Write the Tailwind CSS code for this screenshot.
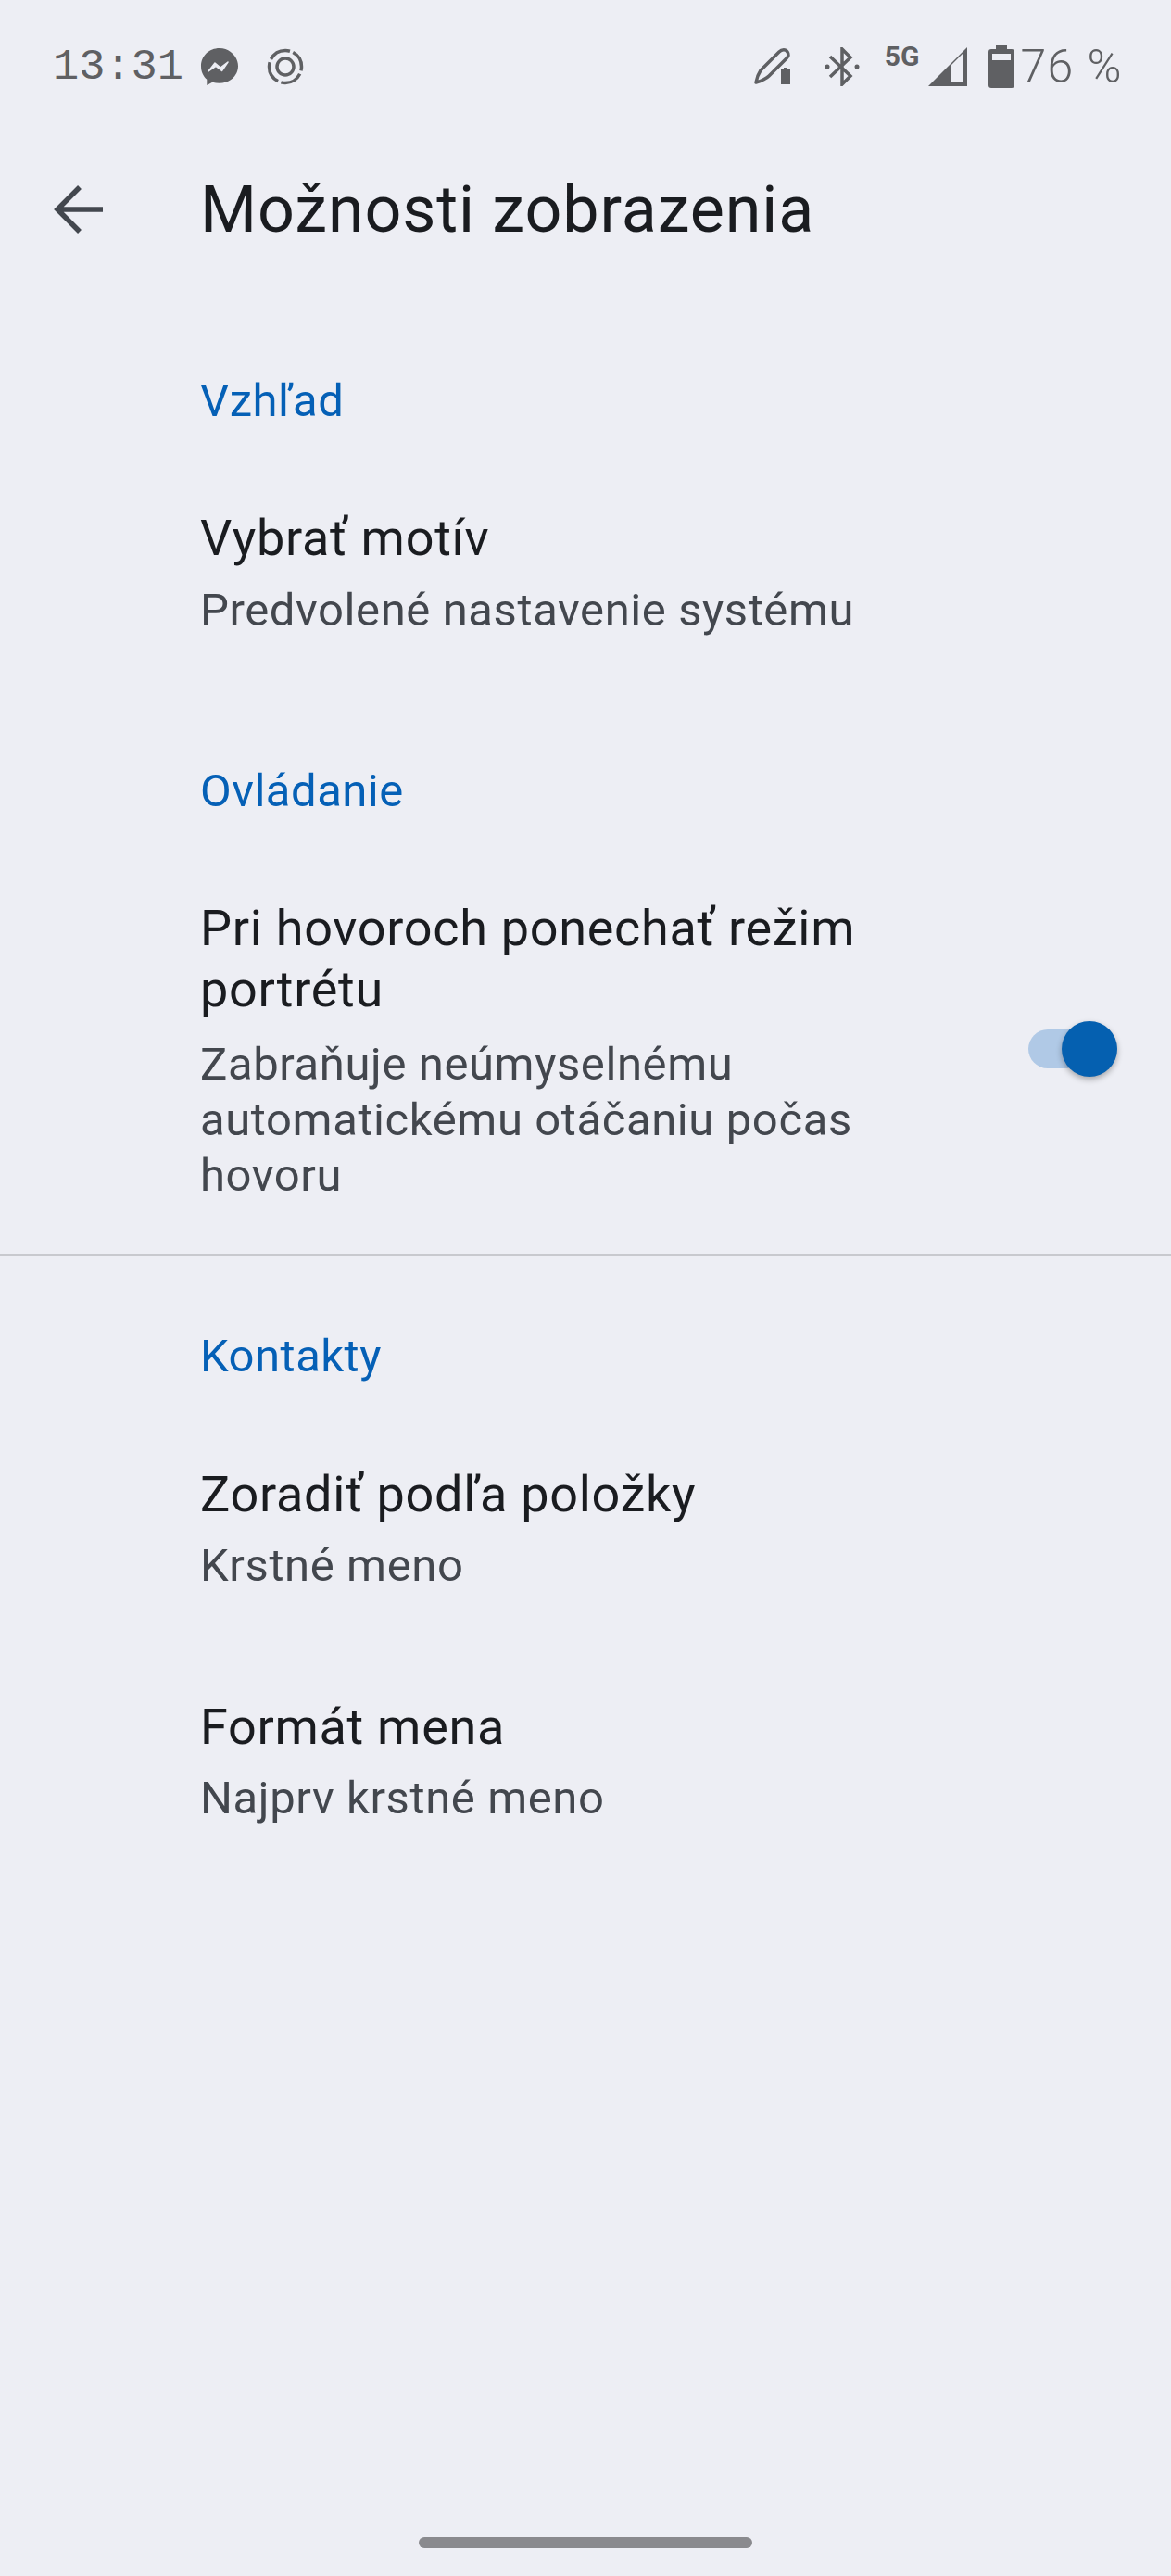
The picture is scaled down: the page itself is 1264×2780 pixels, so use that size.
<!DOCTYPE html>
<html lang="sk">
<head>
    <meta charset="UTF-8">
    <meta name="viewport" content="width=device-width, initial-scale=1.0">
    <title>Možnosti zobrazenia</title>
    <script src="https://cdn.jsdelivr.net/npm/@tailwindcss/browser@4"></script>
</head>
<body class="bg-[#edeef4] font-['Roboto',sans-serif] text-[#1a1c20]">
    <div class="relative w-[1264px] h-[2780px] overflow-hidden flex flex-col">
        <!-- Status bar -->
        <div class="h-[144px] flex items-center justify-between pl-[57px] pr-[52px] text-[#5f6063]">
            <div class="flex items-center">
                <span class="font-['Liberation_Mono',monospace] text-[47px] leading-none mt-[1px]">13:31</span>
                <svg class="ml-[18px] w-[42px] h-[42px]" viewBox="0 0 42 42">
                    <path d="M21 1C9.700 1 1 9.300 1 20.400c0 5.800 2.400 10.800 6.300 14.300v6.300l6-3.300c2.400.7 5 1 7.700 1 11.300 0 20-8.300 20-18.300S32.300 1 21 1z" fill="#5f6063"/>
                    <path d="M9 26l7-9 6 5 8-6-6.500 9.500-6.500-5z" fill="#edeef4" stroke="#edeef4" stroke-width="1.500" stroke-linejoin="round"/>
                </svg>
                <svg class="ml-[30px] w-[40px] h-[40px]" viewBox="0 0 40 40" fill="none" stroke="#5f6063">
                    <circle cx="20" cy="20" r="17.500" stroke-width="3.500" stroke-dasharray="24 3.500" stroke-dashoffset="-8"/>
                    <circle cx="20" cy="20" r="9" stroke-width="3.500"/>
                </svg>
            </div>
            <div class="flex items-center">
                <svg class="w-[42px] h-[42px]" viewBox="0 0 42 42" fill="none">
                    <path d="M2 38c1-6 3-10 5-13L27 5c3-3 7-3 9 0s1 5-1 7L16 31c-3 3-7 5-14 7z" stroke="#5f6063" stroke-width="3.500" stroke-linejoin="round"/>
                    <path d="M29 24h3v-2h4v2h3v16H29z" fill="#5f6063"/>
                </svg>
                <svg class="ml-[34px] w-[38px] h-[42px]" viewBox="0 0 38 42" fill="none" stroke="#5f6063" stroke-width="3.500">
                    <path d="M6 10l22 21-9 9V2l9 9L6 32"/>
                    <circle cx="3" cy="21" r="2.500" fill="#5f6063" stroke="none"/>
                    <circle cx="35" cy="21" r="2.500" fill="#5f6063" stroke="none"/>
                </svg>
                <span class="ml-[27px] -mt-[22px] text-[30px] leading-none font-bold">5G</span>
                <svg class="ml-[9px] w-[44px] h-[44px]" viewBox="0 0 44 44">
                    <path d="M1 43L43 1v42z" fill="#5f6063"/>
                    <path d="M26 39V20l13-13v32z" fill="#edeef4"/>
                </svg>
                <svg class="ml-[22px] w-[28px] h-[46px]" viewBox="0 0 28 46">
                    <path d="M8 0h12v4h5a3 3 0 0 1 3 3v36a3 3 0 0 1-3 3H3a3 3 0 0 1-3-3V7a3 3 0 0 1 3-3h5z" fill="#5f6063"/>
                    <path d="M4 9h20v7H4z" fill="#edeef4"/>
                </svg>
                <span class="ml-[6px] text-[50px] leading-none font-light tracking-[1.5px]">76 %</span>
            </div>
        </div>

        <!-- Header -->
        <div class="h-[164px] flex items-center">
            <svg class="ml-[58px] w-[54px] h-[54px]" viewBox="0 0 54 54" fill="none" stroke="#43474e" stroke-width="5.500">
                <path d="M53 27H4M28 3L4 27l24 24"/>
            </svg>
            <h1 class="ml-[104px] text-[70px] leading-none tracking-[0.9px]">Možnosti zobrazenia</h1>
        </div>

        <!-- Settings list -->
        <div class="pl-[216px] mt-[95px]">
            <h2 class="text-[49px] leading-[60px] tracking-[0.5px] text-[#0560b6]">Vzhľad</h2>
            <div class="mt-[85px]">
                <p class="text-[54px] leading-[66px] tracking-[0.7px]">Vybrať motív</p>
                <p class="mt-[15px] text-[49px] leading-[60px] tracking-[0.6px] text-[#43474e]">Predvolené nastavenie systému</p>
            </div>
            <h2 class="mt-[135px] text-[49px] leading-[60px] tracking-[0.5px] text-[#0560b6]">Ovládanie</h2>
            <div class="mt-[85px] flex items-center">
                <div class="w-[760px]">
                    <p class="text-[54px] leading-[66px] tracking-[0.7px]">Pri hovoroch ponechať režim portrétu</p>
                    <p class="mt-[18px] text-[49px] leading-[60px] tracking-[0.6px] text-[#43474e]">Zabraňuje neúmyselnému automatickému otáčaniu počas hovoru</p>
                </div>
                <div class="relative ml-[134px] mb-[5px] w-[96px] h-[42px] rounded-full bg-[#b0c9e6]">
                    <div class="absolute right-0 -top-[9px] w-[60px] h-[60px] rounded-full bg-[#0560b0] shadow-[0_3px_6px_rgba(0,0,0,0.3)]"></div>
                </div>
            </div>
        </div>
        <div class="mt-[54px] h-[2px] bg-[#c8c9ce]"></div>
        <div class="pl-[216px] mt-[79px]">
            <h2 class="text-[49px] leading-[60px] tracking-[0.5px] text-[#0560b6]">Kontakty</h2>
            <div class="mt-[86px]">
                <p class="text-[54px] leading-[66px] tracking-[0.7px]">Zoradiť podľa položky</p>
                <p class="mt-[14px] text-[49px] leading-[60px] tracking-[0.6px] text-[#43474e]">Krstné meno</p>
            </div>
            <div class="mt-[111px]">
                <p class="text-[54px] leading-[66px] tracking-[0.7px]">Formát mena</p>
                <p class="mt-[14px] text-[49px] leading-[60px] tracking-[0.6px] text-[#43474e]">Najprv krstné meno</p>
            </div>
        </div>

        <!-- Gesture pill -->
        <div class="absolute left-[452px] top-[2738px] w-[360px] h-[12px] rounded-full bg-[#8a8a8e]"></div>
    </div>
</body>
</html>
